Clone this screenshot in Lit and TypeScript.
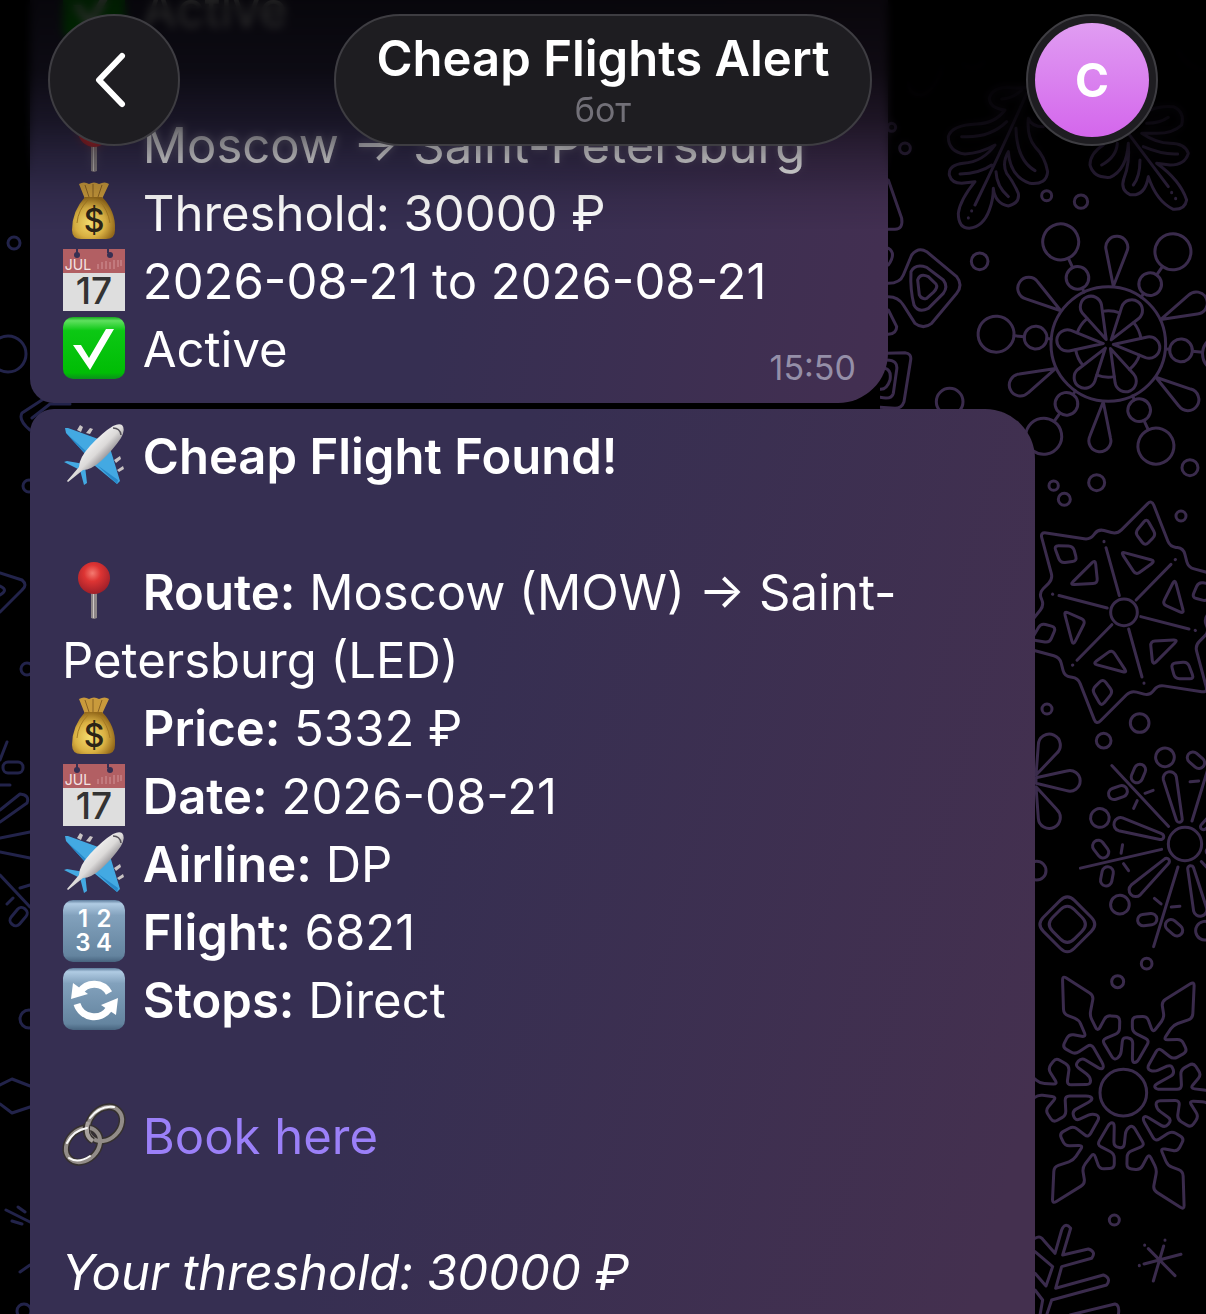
import { LitElement, css, html, svg } from 'lit'
import { customElement, property } from 'lit/decorators.js'

type Point = [number, number]

const turns = [0, 60, 120, 180, 240, 300]

const rotatePoint = ([x, y]: Point, deg: number): Point => {
  const a = (deg * Math.PI) / 180
  return [
    x * Math.cos(a) - y * Math.sin(a),
    x * Math.sin(a) + y * Math.cos(a),
  ]
}

// closed polygon with softened corners
const rounded = (points: Point[], radius = 14) => {
  const parts = points.map((p, i) => {
    const prev = points[(i + points.length - 1) % points.length]
    const next = points[(i + 1) % points.length]
    const towards = (q: Point) => {
      const length = Math.hypot(q[0] - p[0], q[1] - p[1])
      const t = Math.min(radius, length / 2) / length
      return `${(p[0] + (q[0] - p[0]) * t).toFixed(1)} ${(
        p[1] +
        (q[1] - p[1]) * t
      ).toFixed(1)}`
    }
    return `${i ? 'L' : 'M'}${towards(prev)} Q${p[0]} ${p[1]} ${towards(next)}`
  })
  return parts.join(' ') + 'Z'
}

const sixfold = (sector: Point[]) =>
  turns.flatMap((deg) => sector.map((p) => rotatePoint(p, deg)))

const circles = (list: number[][]) =>
  list.map(([x, y, r]) => svg`<circle cx=${x} cy=${y} r=${r} />`)

const starSector: Point[] = [
  [83, -338], [138, -197], [178, -192], [193, -135],
]

const flakeSector: Point[] = [
  [213, -334], [208, -223], [150, -203], [120, -158], [175, -160],
  [192, -123], [150, -100], [105, -135], [70, -72], [92, -62],
  [144, -85], [154, -56], [92, -22], [98, -10], [175, -10],
  [172, -68], [210, -90], [234, -53], [200, -13], [256, -6], [294, -37],
]

const berryFlake = svg`
  <g transform="translate(685 432)">
    <circle r="172" />
    ${turns.map(
      (deg) => svg`
        <g transform="rotate(${deg + 5})">
          <path d="M172 0H185M253 0H284M15 0L115 -31A32 32 0 1 1 115 31Z" />
          <circle cx="219" r="34" />
          <circle cx="338" r="54" />
        </g>
        <g transform="rotate(${deg + 35})">
          <path d="M174 0L280 -31A33 33 0 1 1 280 31Z" />
          <path d="M96 -26A100 100 0 0 1 96 26" />
        </g>
      `
    )}
  </g>
`

const starFlake = svg`
  <g transform="translate(342 397)">
    <circle r="40" />
    <path d=${rounded(sixfold(starSector), 18)} />
    ${turns.map(
      (deg) => svg`
        <g transform="rotate(${deg})">
          <path d=${rounded([[68, -282], [96, -232], [63, -199], [33, -239]])} />
          <path d=${rounded([[-10, -182], [94, -154], [36, -112]])} />
          <path d="M-14 -50L-54 -194M-60 -213V-212" />
        </g>
      `
    )}
  </g>
`

const burstFlake = svg`
  <g transform="translate(525 372)">
    <circle r="50" />
    ${turns.map(
      (deg) => svg`
        <g transform="rotate(${deg - 103})">
          <path d="M76 -9L202 -20A20 20 0 1 1 202 20L76 9A9 9 0 0 1 76 -9Z" />
          <circle cx="267" r="28" />
        </g>
        <g transform="rotate(${deg - 133})">
          <path d="M72 0H322" />
          <path d="M183 40L193 16M183 -40L193 -16" transform="rotate(0)" />
          <rect x="-29" y="-17" width="58" height="34" rx="17" transform="translate(250 42) rotate(66)" />
          <rect x="-29" y="-17" width="58" height="34" rx="17" transform="translate(250 -42) rotate(-66)" />
        </g>
      `
    )}
  </g>
`

const rightPattern = svg`
  <g transform="translate(880 0) scale(.3333)">
    <path opacity=".3" d="M85 245Q85 285 125 285Q170 270 190 190M240 185Q280 230 320 180M890 140Q910 200 970 210" />
    <path opacity=".8" d="M440 262Q410 266 380 262Q335 265 328 295Q330 325 375 330Q345 370 290 372Q215 375 205 410Q205 455 255 462Q300 460 345 435Q310 485 250 490Q205 495 208 525Q215 550 245 550L285 545Q240 600 235 640Q235 685 268 685Q310 680 328 630Q340 600 340 565Q345 610 385 618Q420 610 415 580Q400 545 380 520Q365 490 385 455Q390 530 450 550Q500 555 503 515Q495 470 465 440Q440 410 445 355Q455 380 490 380" />
    <path opacity=".8" d="M440 280Q370 440 285 615M275 632V633M265 653V654M245 410Q330 415 380 365M240 522Q300 520 335 495M465 512Q410 480 408 385M385 590Q350 560 348 515M365 297Q400 295 425 270" />
    <path opacity=".8" d="M790 340Q830 315 880 320Q915 335 905 375Q880 400 830 400H785Q830 430 870 430Q915 430 925 460Q915 495 870 495L830 490Q900 540 920 600Q915 630 880 628Q830 605 805 530Q795 590 750 584Q720 570 732 535Q750 490 745 430Q740 510 690 532Q640 535 630 495Q630 460 670 435" />
    <path opacity=".8" d="M745 400L865 560M875 577V578M887 595V596M800 370Q840 370 865 352M790 440Q850 465 893 462M665 495Q710 470 712 430M760 555Q780 530 780 480" />
    <path d="M25 540L65 655Q70 688 45 688H20" />
    ${circles([[75, 445, 16], [35, 382, 12], [500, 587, 15], [603, 605, 20]])}
  </g>
  <g transform="translate(880 200) scale(.3333)">
    ${berryFlake}
    <path d="M25 250Q60 250 70 225L95 165Q115 140 140 155L230 230Q250 255 230 280L155 370Q130 390 105 370L70 315Q55 290 25 290" />
    <path d="M93 215Q105 190 140 202L190 240Q205 260 190 280L145 325Q115 340 102 315Q90 270 93 215ZM113 240Q120 218 145 230L168 252Q175 262 160 277L140 295Q125 300 118 285Z" />
    <path d="M25 330L50 380Q50 400 25 403M25 145Q50 160 25 195M20 460L75 458Q95 460 92 480L72 605Q65 625 45 625L0 622M20 480Q55 480 50 510L40 580Q35 600 0 592M15 505Q35 510 30 540Q20 570 0 568" />
    ${circles([
      [299, 184, 25], [209, 605, 40], [930, 803, 24],
      [650, 848, 24], [521, 857, 14], [553, 898, 18],
    ])}
  </g>
  <g transform="translate(1010 480) scale(.3333)">
    ${starFlake}
    ${circles([[513, 108, 15], [111, 687, 15], [389, 729, 28]])}
  </g>
  <g transform="translate(1010 720) scale(.3333)">
    ${burstFlake}
    <path d="M78 165L85 75A33 33 0 1 1 140 100ZM78 173L170 153A31 31 0 1 1 170 212L78 190ZM78 200L140 268A33 33 0 1 1 85 295Z" />
    <path d=${rounded([[172, 520], [265, 613], [172, 706], [79, 613]], 30)} />
    <path d=${rounded([[172, 548], [237, 613], [172, 678], [107, 613]], 30)} />
    ${circles([[80, 452, 28], [281, 62, 22], [410, 731, 16]])}
  </g>
  <g transform="translate(1010 950) scale(.3333)">
    <g transform="translate(340 428)">
      <circle r="70" />
      <path d=${rounded(sixfold(flakeSector))} />
    </g>
    <path d="M430 993L461 888M465 870V871M495 977L415 896M404 885V886M513 913L402 942M388 946V947" />
    <path d="M75 865Q90 855 100 870L135 910L155 840Q165 815 182 835L158 915L235 897Q260 905 245 925L155 950L137 1015L280 975Q305 985 290 1005L125 1050L110 1095M75 905L128 950L108 1008L75 970M75 1020L98 1050L90 1095M180 1095L315 1062Q330 1065 325 1095" />
    ${circles([[323, 95, 18], [313, 810, 15]])}
  </g>
`

const leftPattern = svg`
  ${circles([
    [14, 243, 6], [8, 354, 18], [29, 486, 6], [27, 669, 6],
    [29, 1019, 9], [24, 1311, 7],
  ])}
  <path d="M60 398H45L22 413Q18 420 30 430M70 404H50L32 418M0 573L22 580Q28 585 22 590L0 612M0 586Q9 590 0 595" />
  <path d="M0 760L7 742M0 785H10M0 810L20 794Q30 795 27 803L0 822M0 838L30 832M0 852L30 858M0 875L30 907M20 888L30 885M7 904L13 898" />
  <rect x="3" y="762" width="20" height="11" rx="5" />
  <rect x="9" y="911" width="20" height="11" rx="5" transform="rotate(-50 19 917)" />
  <path d="M0 1085L12 1079L30 1086M0 1104L12 1113L30 1107M6 1210L30 1222M12 1221L22 1224M18 1207L25 1212M20 1272L30 1265" />
`

const steel = svg`
  <defs>
    <linearGradient id="steel" x2="0" y2="1">
      <stop offset="0" stop-color="#5d7c9c" />
      <stop offset=".06" stop-color="#b0cbe3" />
      <stop offset=".25" stop-color="#82a1bc" />
      <stop offset=".9" stop-color="#64849f" />
      <stop offset="1" stop-color="#48647f" />
    </linearGradient>
  </defs>
  <rect width="62" height="62" rx="10" fill="url(#steel)" />
`

const icons = {
  bag: svg`
    <defs>
      <radialGradient id="gold" cx=".42" cy=".6" r=".6">
        <stop offset="0" stop-color="#f6df70" />
        <stop offset=".6" stop-color="#d9b042" />
        <stop offset="1" stop-color="#94691a" />
      </radialGradient>
    </defs>
    <path fill="#c99a3c" d="M16 3Q21 0 26 3Q31 0 36 3Q42 0 46 3L39 18H22Z" />
    <path stroke="#8a6223" fill="none" d="M22 4L26 16M30 3V16M39 4L35 16" />
    <path fill="url(#gold)" d="M22 16H39Q53 30 52 49Q52 58 43 58H18Q9 58 9 49Q9 30 22 16Z" />
    <path stroke="#a57a22" fill="none" d="M25 19Q15 29 14 42M36 19Q45 29 47 42" />
    <text x="31" y="51" font-size="32" font-weight="500" fill="#2b2417">$</text>
  `,
  calendar: svg`
    <path fill="#dedede" d="M0 0H62V62H0Z" />
    <path fill="#b25f63" d="M0 0H62V24H0Z" />
    <path stroke="#362f52" stroke-width="2" d="M14 0V4M45 0V4" />
    <circle cx="14" cy="6" r="3" fill="#362f52" />
    <circle cx="47" cy="6" r="3" fill="#362f52" />
    <path stroke="#d29599" d="M35 20V15M39 20V13M43 20V12M47 20V13M51 20V11M55 18V11M58 17V11" />
    <text x="15" y="21" font-size="14" fill="#f4e4e4">JUL</text>
    <text x="31" y="55" font-size="37" font-weight="500" fill="#333">17</text>
  `,
  check: svg`
    <defs>
      <linearGradient id="green" x2="0" y2="1">
        <stop offset="0" stop-color="#14a91c" />
        <stop offset=".06" stop-color="#5fe05f" />
        <stop offset=".22" stop-color="#0cc814" />
        <stop offset=".9" stop-color="#00bd05" />
        <stop offset="1" stop-color="#0b8f1c" />
      </linearGradient>
    </defs>
    <rect width="62" height="62" rx="10" fill="url(#green)" />
    <path fill="#fff" d="M10 28H18L26 41L43 12H51L27 53Z" />
  `,
  plane: svg`
    <defs>
      <linearGradient id="hull" x1=".3" y1=".3" x2=".65" y2=".65">
        <stop offset="0" stop-color="#f8f8f8" />
        <stop offset=".6" stop-color="#dcdad9" />
        <stop offset="1" stop-color="#8f8c90" />
      </linearGradient>
    </defs>
    <path fill="#c9c4c4" d="M14 6L17 1L20 3L18 8ZM23 9L27 4L30 5L27 10ZM51 36L57 32L58 35L53 39ZM54 46L60 42L61 45L56 48Z" />
    <path fill="#43a9e2" d="M2 4L5 4L38 16L24 32L3 9ZM47 24L57 57L54 60L31 41ZM1 38L4 37L21 40L15 45ZM17 46L22 42L24 59L21 61Z" />
    <path fill="#2788c9" d="M3 9L24 28V32ZM34 41L54 60L55 56Z" />
    <path fill="url(#hull)" d="M59 1Q63 5 58 14Q50 26 38 37Q28 46 20 46L5 58L4 57L16 43Q16 34 27 22Q40 8 50 2Q56 -1 59 1Z" />
    <path fill="none" stroke="#55525a" stroke-width="1.5" d="M50 4Q57 4 58 11" />
  `,
  pin: svg`
    <defs>
      <radialGradient id="red" cx=".45" cy=".35" r=".65">
        <stop offset="0" stop-color="#f47a70" />
        <stop offset=".4" stop-color="#dd3433" />
        <stop offset="1" stop-color="#9e1f29" />
      </radialGradient>
    </defs>
    <path fill="#8d8587" d="M28 31H34V58L31 59L28 58Z" />
    <path fill="#cfc8c6" d="M30 31H31V58H30Z" />
    <circle cx="31" cy="18" r="16" fill="url(#red)" />
  `,
  numbers: svg`
    ${steel}
    <g fill="#fff" font-size="24" font-weight="600">
      <text x="20" y="27">1</text>
      <text x="41" y="27">2</text>
      <text x="20" y="51">3</text>
      <text x="41" y="51">4</text>
    </g>
  `,
  cycle: svg`
    ${steel}
    <path fill="none" stroke="#fff" stroke-width="7" d="M17 24A17 17 0 0 1 46 25M14 36A18 18 0 0 0 46 41" />
    <path fill="#fff" d="M8 31L10 15L25 26ZM55 30L53 47L38 37Z" />
  `,
  chain: svg`
    <g fill="none">
      <g stroke="#35302f" stroke-width="7">
        <ellipse cx="42" cy="20" rx="19" ry="15" transform="rotate(-45 42 20)" />
        <ellipse cx="20" cy="41" rx="19" ry="15" transform="rotate(-45 20 41)" />
      </g>
      <g stroke="#928c88" stroke-width="4">
        <ellipse cx="42" cy="20" rx="19" ry="15" transform="rotate(-45 42 20)" />
        <ellipse cx="20" cy="41" rx="19" ry="15" transform="rotate(-45 20 41)" />
      </g>
      <path stroke="#35302f" stroke-width="7" d="M24 20Q21 32 30 37" />
      <path stroke="#a8a29e" stroke-width="4" d="M25 18Q21 32 30 37" />
      <path stroke="#fafafa" stroke-width="2" stroke-linecap="round" d="M27 14Q37 1 51 3M4 39Q11 26 24 24M6 54Q15 60 27 52" />
    </g>
  `,
}

type IconName = keyof typeof icons

@customElement('chat-icon')
class ChatIcon extends LitElement {
  static styles = css`
    :host {
      display: inline-block;
      width: 62px;
      height: 62px;
      margin: 0 4px 0 1px;
      vertical-align: -12px;
    }
    svg {
      display: block;
      overflow: visible;
      font-family: Inter, 'Liberation Sans', sans-serif;
    }
    text {
      text-anchor: middle;
    }
  `
  @property() name: IconName = 'check'

  render() {
    return html`<svg width="62" height="62" viewBox="0 0 62 62" aria-hidden="true">
      ${icons[this.name]}
    </svg>`
  }
}

@customElement('chat-wallpaper')
class ChatWallpaper extends LitElement {
  static styles = css`
    :host {
      position: absolute;
      inset: 0;
      display: flex;
      justify-content: space-between;
      overflow: hidden;
      background: #000;
    }
    svg {
      flex: none;
      fill: none;
      stroke-linecap: round;
      stroke-linejoin: round;
    }
    .left {
      stroke: #22234a;
      stroke-width: 3;
    }
    .right {
      stroke: #3a2b4c;
      stroke-width: 9;
    }
  `
  render() {
    return html`
      <svg class="left" width="100" height="1314" viewBox="0 0 100 1314" aria-hidden="true">
        ${leftPattern}
      </svg>
      <svg class="right" width="326" height="1314" viewBox="880 0 326 1314" aria-hidden="true">
        ${rightPattern}
      </svg>
    `
  }
}

@customElement('chat-header')
class ChatHeader extends LitElement {
  static styles = css`
    :host {
      position: absolute;
      inset: 0 0 auto;
      display: block;
    }
    .blur,
    .shade {
      position: absolute;
      inset: 0 0 auto;
    }
    .blur {
      height: 180px;
      backdrop-filter: blur(4px);
      mask-image: linear-gradient(#000 70px, transparent);
    }
    .shade {
      height: 230px;
      background: linear-gradient(
        rgba(0, 0, 0, 0.86),
        rgba(0, 0, 0, 0.76) 70px,
        rgba(0, 0, 0, 0.54) 120px,
        rgba(0, 0, 0, 0.28) 160px,
        rgba(0, 0, 0, 0.08) 200px,
        transparent
      );
    }
    .bar {
      position: relative;
      display: flex;
      justify-content: space-between;
      padding: 14px 48px;
    }
    button,
    .title {
      box-sizing: border-box;
      height: 132px;
      border: 2px solid #3e3d42;
      border-radius: 66px;
      background: #1e1d21;
      color: #fff;
      font-family: inherit;
    }
    button {
      display: flex;
      align-items: center;
      justify-content: center;
      width: 132px;
      padding: 0;
    }
    .title {
      padding: 12px 41px;
      text-align: center;
    }
    h1 {
      margin: 0;
      font-size: 49px;
      font-weight: 600;
      line-height: 62px;
    }
    p {
      margin: 0;
      color: #727078;
      font-size: 34px;
      line-height: 40px;
    }
    .avatar {
      display: flex;
      align-items: center;
      justify-content: center;
      width: 114px;
      height: 114px;
      border-radius: 50%;
      background: linear-gradient(#e09df2, #d466ec);
      font-size: 46px;
      font-weight: 700;
    }
    .back svg {
      fill: none;
      stroke: #fff;
      stroke-width: 6;
      stroke-linecap: round;
      stroke-linejoin: round;
    }
  `
  render() {
    return html`
      <div class="blur"></div>
      <div class="shade"></div>
      <div class="bar">
        <button class="back" aria-label="Назад">
          <svg width="64" height="64" viewBox="0 0 64 64">
            <path d="M40 8L17 32L40 56" />
          </svg>
        </button>
        <div class="title">
          <h1>Cheap Flights Alert</h1>
          <p>бот</p>
        </div>
        <button aria-label="Cheap Flights Alert"><span class="avatar">C</span></button>
      </div>
    `
  }
}

@customElement('app-root')
class AppRoot extends LitElement {
  static styles = css`
    :host {
      position: relative;
      display: block;
      height: 100vh;
      overflow: hidden;
      color: #fff;
      font-family: Inter, 'Liberation Sans', sans-serif;
    }
    /* the thread is scrolled a little under the header */
    .thread {
      position: relative;
      display: flex;
      flex-direction: column;
      gap: 6px;
      margin-top: -38px;
      padding: 0 171px 0 30px;
    }
    .bubble {
      box-sizing: border-box;
      padding: 14px 32px 19px;
      font-size: 49px;
      line-height: 68px;
    }
    .first {
      margin-right: 147px;
      border-radius: 0 0 50px 24px;
      background: linear-gradient(100deg, #362f52 50%, #432f51);
    }
    .second {
      border-radius: 24px 50px 0 0;
      background: linear-gradient(105deg, #362f52 40%, #44304f 95%);
    }
    .line {
      height: 68px;
    }
    .wrapping {
      height: auto;
    }
    .last {
      display: flex;
      justify-content: space-between;
      align-items: flex-end;
    }
    b {
      font-weight: 600;
    }
    a {
      color: #9b80f8;
      text-decoration: none;
    }
    time {
      color: #958fa8;
      font-size: 34px;
      line-height: 32px;
    }
  `

  details: [IconName, string, string][] = [
    ['pin', 'Route:', 'Moscow (MOW) → Saint-Petersburg (LED)'],
    ['bag', 'Price:', '5332 ₽'],
    ['calendar', 'Date:', '2026-08-21'],
    ['plane', 'Airline:', 'DP'],
    ['numbers', 'Flight:', '6821'],
    ['cycle', 'Stops:', 'Direct'],
  ]

  renderLine(icon: IconName, text: string) {
    return html`<div class="line"><chat-icon name=${icon}></chat-icon> ${text}</div>`
  }

  render() {
    return html`
      <chat-wallpaper></chat-wallpaper>
      <main class="thread">
        <article class="bubble first">
          ${this.renderLine('check', 'Active')}
          <div class="line"></div>
          ${this.renderLine('pin', 'Moscow → Saint-Petersburg')}
          ${this.renderLine('bag', 'Threshold: 30000 ₽')}
          ${this.renderLine('calendar', '2026-08-21 to 2026-08-21')}
          <div class="last">
            ${this.renderLine('check', 'Active')}
            <time>15:50</time>
          </div>
        </article>
        <article class="bubble second">
          <div class="line">
            <chat-icon name="plane"></chat-icon> <b>Cheap Flight Found!</b>
          </div>
          <div class="line"></div>
          ${this.details.map(
            ([icon, label, value]) => html`
              <div class="line wrapping">
                <chat-icon name=${icon}></chat-icon> <b>${label}</b> ${value}
              </div>
            `
          )}
          <div class="line"></div>
          <div class="line">
            <chat-icon name="chain"></chat-icon> <a href="#book">Book here</a>
          </div>
          <div class="line"></div>
          <div class="line"><i>Your threshold: 30000 ₽</i></div>
        </article>
      </main>
      <chat-header></chat-header>
    `
  }
}
